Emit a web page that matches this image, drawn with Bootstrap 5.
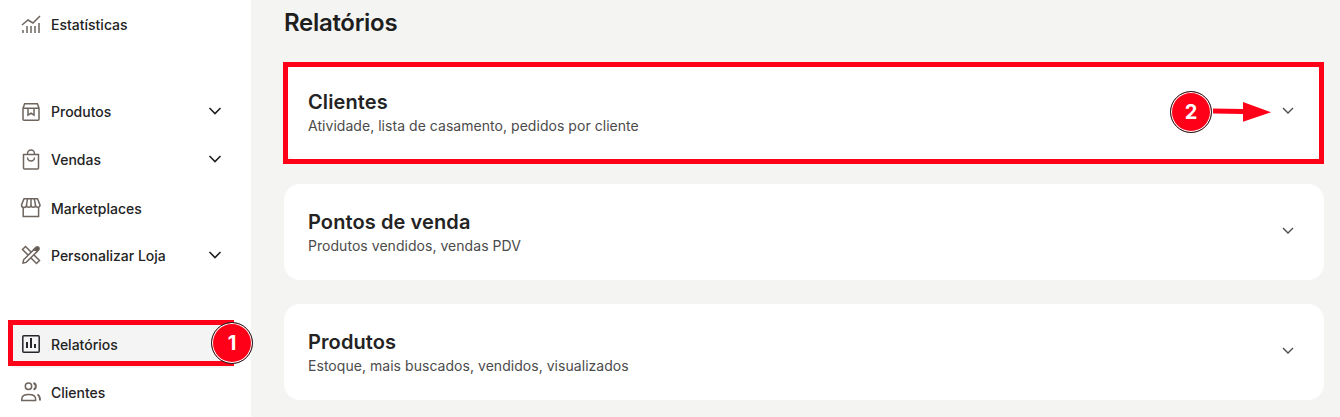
<!DOCTYPE html>
<html lang="pt-BR">
<head>
<meta charset="utf-8">
<title>Relatórios</title>
<link href="https://cdn.jsdelivr.net/npm/bootstrap@5.3.0/dist/css/bootstrap.min.css" rel="stylesheet">
<style>
html,body{height:417px;overflow:hidden}
body{font-family:Inter,"Liberation Sans",sans-serif;background:#f4f4f3;color:#202020;position:relative}
.shell{height:417px}
.side{width:251px;flex:none;background:#fff;padding:0 15px 0 8px}
.side-group+.side-group{margin-top:39px}
.side-group.last-group{margin-top:41px}
.side-item{height:48px;padding:0 14px 0 13px;font-size:14px;font-weight:500;color:#232323;border-radius:8px}
.side-item.nudge{padding-top:2px}
.side-item.active{background:#f4f4f4}
.side-item svg.ico{width:20px;height:20px;margin-right:10px;flex:none;fill:none;stroke:#6e655f;stroke-width:1.5;overflow:visible}
.side-item.active svg.ico{stroke:#24262b}
.ico .solid{fill:#5b5550}
.ico .paper{fill:#fff}
.chev{margin-left:auto;margin-right:0;width:14px;height:8px;fill:none;stroke:#202020;stroke-width:1.6}
.main-area{padding:0 16px 0 33px;min-width:0}
.page-title{font-size:24px;font-weight:600;letter-spacing:-.3px;line-height:46px;margin:0 0 18px;color:#1e1e1e}
.rep{height:96px;border-radius:16px;background:#fff;padding:0 24px;margin-bottom:24px}
.rep-text{padding-top:4px}
.rep-title{font-size:20px;font-weight:600;letter-spacing:.1px;line-height:24px;margin:0;color:#232323}
.rep-sub{font-size:14px;letter-spacing:.04px;line-height:24px;margin:0;color:#4b4b4b}
.rep .chev{width:12px;height:7px;stroke:#4b4b4b;stroke-width:1.4;margin-right:6px;margin-bottom:3px}
.mark-box{position:absolute;border:5px solid #ff0019;pointer-events:none}
.mark-a{left:8px;top:320px;width:226px;height:46px}
.mark-b{left:283px;top:62px;width:1041px;height:102px}
.mark-dot{position:absolute;width:42px;height:42px;border-radius:50%;background:#ff0019;color:#fff;font-weight:700;font-size:20px;border:1px solid #222;box-shadow:inset 0 0 0 1px #fff}
.dot-a{left:211px;top:322px}
.dot-b{left:1170px;top:91px}
.mark-arrow{position:absolute;left:1213px;top:100px;width:60px;height:26px}
</style>
</head>
<body>
<div class="d-flex shell">
  <nav class="side">
    <div class="side-group">
      <div class="side-item d-flex align-items-center">
        <svg class="ico" viewBox="0 0 20 20"><path d="M1 11 7 6l5 3 7-7"/><path d="M2 16v3M6 12v7M10 12v7M14 12v7M18 9v10"/></svg>Estatísticas
      </div>
    </div>
    <div class="side-group">
      <div class="side-item d-flex align-items-center">
        <svg class="ico" viewBox="0 0 20 20"><path d="M2 7.200 3.600 2.700h12.800L18 7.200V18.200a1 1 0 0 1-1 1H3a1 1 0 0 1-1-1zM2 7.200h16M7 7.200v7l3-2 3 2v-7"/></svg>Produtos
        <svg class="chev" viewBox="0 0 14 8"><path d="M1.500 1 7 6.500 12.500 1"/></svg>
      </div>
      <div class="side-item d-flex align-items-center">
        <svg class="ico" viewBox="0 0 20 20"><path d="M2.500 5.500h15V19a1 1 0 0 1-1 1h-13a1 1 0 0 1-1-1z"/><path d="M6.500 5.500v-1a3.500 3.500 0 0 1 7 0v1M6.500 8.500a3.500 3.500 0 0 0 7 0"/></svg>Vendas
        <svg class="chev" viewBox="0 0 14 8"><path d="M1.500 1 7 6.500 12.500 1"/></svg>
      </div>
      <div class="side-item nudge d-flex align-items-center">
        <svg class="ico" viewBox="0 0 20 20"><path d="M3 .8h13.500L19 7a2.250 2.250 0 0 1-4.500 0 2.250 2.250 0 0 1-4.500 0 2.250 2.250 0 0 1-4.500 0A2.250 2.250 0 0 1 .5 7z"/><path d="M2.200 9.500v9h15.400v-9M6.500 1 5.500 7M10 1v6M13.300 1l1.200 6"/></svg>Marketplaces
      </div>
      <div class="side-item d-flex align-items-center">
        <svg class="ico" viewBox="0 0 20 20"><path d="M4.500 1.500 18.500 15.500 15.500 18.500 1.500 4.500z"/><path class="paper" d="M2 18 2.600 14.800 13.500 3.900 16.100 6.500 5.200 17.400z"/><path class="solid" d="M13.500 3.900l1.500-1.500a1.800 1.800 0 0 1 2.600 2.600l-1.500 1.500z"/></svg>Personalizar Loja
        <svg class="chev" viewBox="0 0 14 8"><path d="M1.500 1 7 6.500 12.500 1"/></svg>
      </div>
    </div>
    <div class="side-group last-group">
      <div class="side-item active d-flex align-items-center">
        <svg class="ico" viewBox="0 0 20 20"><rect x="1.800" y="1.800" width="16.400" height="16.400" rx="1"/><path stroke-width="2" d="M6 14V8M10 14V4M14 14v-4"/></svg>Relatórios
      </div>
      <div class="side-item d-flex align-items-center">
        <svg class="ico" viewBox="0 0 20 20"><circle cx="7.500" cy="4.300" r="3.200"/><path d="M.8 18.500V17c0-3 3-4.500 6.900-4.500s6.900 1.500 6.900 4.500v1.500z"/><path stroke-width="2" d="M12.500 1a3.500 3.500 0 0 1 0 6.600M16.500 12.500c1.800 1 2.500 2.500 2.500 6"/></svg>Clientes
      </div>
    </div>
  </nav>
  <main class="main-area flex-grow-1">
    <h1 class="page-title">Relatórios</h1>
    <section class="rep d-flex align-items-center">
      <div class="rep-text"><h2 class="rep-title">Clientes</h2><p class="rep-sub">Atividade, lista de casamento, pedidos por cliente</p></div>
      <svg class="chev" viewBox="0 0 12 7"><path d="M1 1 6 6l5-5"/></svg>
    </section>
    <section class="rep d-flex align-items-center">
      <div class="rep-text"><h2 class="rep-title">Pontos de venda</h2><p class="rep-sub">Produtos vendidos, vendas PDV</p></div>
      <svg class="chev" viewBox="0 0 12 7"><path d="M1 1 6 6l5-5"/></svg>
    </section>
    <section class="rep d-flex align-items-center">
      <div class="rep-text"><h2 class="rep-title">Produtos</h2><p class="rep-sub">Estoque, mais buscados, vendidos, visualizados</p></div>
      <svg class="chev" viewBox="0 0 12 7"><path d="M1 1 6 6l5-5"/></svg>
    </section>
  </main>
</div>
<div class="mark-box mark-a"></div>
<div class="mark-box mark-b"></div>
<div class="mark-dot dot-a d-flex align-items-center justify-content-center">1</div>
<div class="mark-dot dot-b d-flex align-items-center justify-content-center">2</div>
<svg class="mark-arrow" viewBox="0 0 60 26"><path d="M0 8.500 30 9V2l28 10.300L30 21.700V14L0 13.500z" fill="#ff0019"/></svg>
</body>
</html>
